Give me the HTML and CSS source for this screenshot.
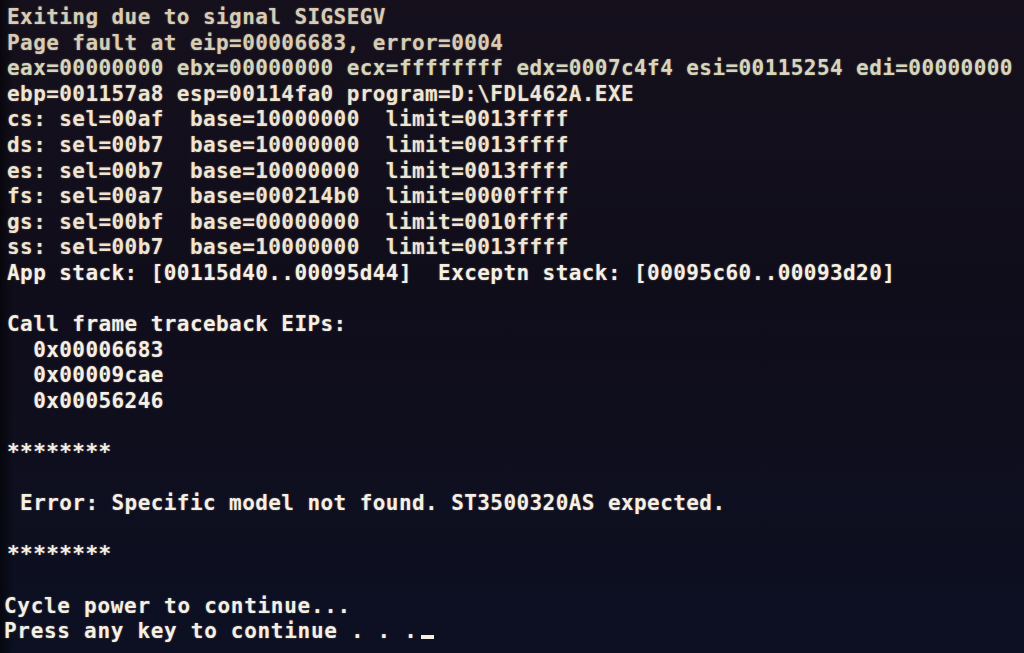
FILE: index.html
```html
<!DOCTYPE html>
<html lang="en">
<head>
<meta charset="utf-8">
<title>SIGSEGV</title>
<link rel="stylesheet" href="styles.css">
</head>
<body>
<main class="screen">
<pre class="console"><span class="ln dim">Exiting due to signal SIGSEGV</span>
<span class="ln dim">Page fault at eip=00006683, error=0004</span>
<span class="ln regs">eax=00000000 ebx=00000000 ecx=ffffffff edx=0007c4f4 esi=00115254 edi=00000000</span>
<span class="ln">ebp=001157a8 esp=00114fa0 program=D:\FDL462A.EXE</span>
<span class="ln">cs: sel=00af  base=10000000  limit=0013ffff</span>
<span class="ln">ds: sel=00b7  base=10000000  limit=0013ffff</span>
<span class="ln">es: sel=00b7  base=10000000  limit=0013ffff</span>
<span class="ln">fs: sel=00a7  base=000214b0  limit=0000ffff</span>
<span class="ln">gs: sel=00bf  base=00000000  limit=0010ffff</span>
<span class="ln">ss: sel=00b7  base=10000000  limit=0013ffff</span>
<span class="ln bright">App stack: [00115d40..00095d44]  Exceptn stack: [00095c60..00093d20]</span>

<span class="ln bright">Call frame traceback EIPs:</span>
<span class="ln bright">  0x00006683</span>
<span class="ln bright">  0x00009cae</span>
<span class="ln bright">  0x00056246</span>

<span class="ln bright">********</span>

<span class="ln bright"> Error: Specific model not found. ST3500320AS expected.</span>

<span class="ln bright">********</span>

<span class="ln bright near">Cycle power to continue...</span>
<span class="ln bright near">Press any key to continue . . .<span class="cursor"></span></span></pre>
</main>
</body>
</html>
```
FILE: styles.css
```css
html, body {
  margin: 0;
  padding: 0;
  width: 1024px;
  height: 653px;
  overflow: hidden;
  background: #0e0c18;
}

.screen {
  width: 1024px;
  height: 653px;
  background:
    linear-gradient(90deg, rgba(0,0,0,0.55) 0px, rgba(0,0,0,0) 14px),
    linear-gradient(180deg, #15101c 0%, #100d1b 45%, #0c1022 100%);
  overflow: hidden;
}

.console {
  margin: 0;
  padding: 5px 0 0 7px;
  font-family: "DejaVu Sans Mono", "Liberation Mono", monospace;
  font-weight: bold;
  font-size: 21px;
  letter-spacing: 0.42px;
  line-height: 25.6px;
  color: #efe5d2;
  white-space: pre;
  text-shadow: 0 0 2px rgba(255, 240, 215, 0.35);
}

.dim {
  color: #d8cdb4;
}

.regs {
  color: #d6d6bc;
}

.bright {
  color: #f6efe4;
}

.near {
  letter-spacing: 0.7px;
  margin-left: -3px;
}

.cursor {
  display: inline-block;
  width: 13px;
  height: 4px;
  margin-left: 3px;
  background: #f6efe4;
  vertical-align: -1px;
}
```
